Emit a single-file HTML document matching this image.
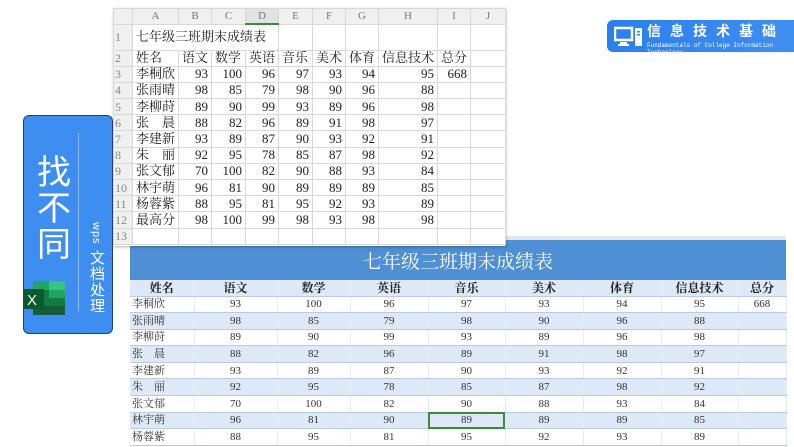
<!DOCTYPE html>
<html><head><meta charset="utf-8"><style>
*{margin:0;padding:0;box-sizing:border-box}
body{width:794px;height:447px;background:#fff;position:relative;overflow:hidden;font-family:"Liberation Serif","Noto Serif CJK SC",serif;}
.a{position:absolute}
table{border-collapse:collapse;position:absolute;table-layout:fixed}
#s td{border:1px solid #d8d8d8;font-size:13px;color:#222;height:16.2px;padding:0 3px;white-space:nowrap;line-height:14px}
#s td.n{text-align:right}
#s tr.h td{background:#f0f0f0;color:#777;text-align:center;font-size:11px;height:14px}
#s td.r{background:#f0f0f0;color:#888;font-size:12px;padding:0 1px}
#b td{font-size:11px;color:#333;text-align:center;height:16.6px;line-height:14px;border-bottom:1px solid #b8cbe2;border-right:1px solid #e4ecf6;white-space:nowrap;padding:0}
#b tr:nth-child(odd) td{background:#dde9f6}
#b td.l{text-align:left;padding-left:2px}
#b tr.hd td{font-weight:bold;font-size:12px;color:#222;background:#dde9f6;height:16px}
</style></head><body>

<div class="a" style="left:505px;top:236px;width:281px;height:5px;background:#e6e6e6"></div>
<div class="a" style="left:130px;top:240px;width:656px;height:40px;background:#4f8fd4;color:#fff;font-size:19px;text-align:center;line-height:46px;font-family:'Liberation Serif','Noto Serif CJK SC',serif">七年级三班期末成绩表</div>
<table id="b" style="left:130px;top:280px;width:656px">
<colgroup><col style="width:64px"><col style="width:83px"><col style="width:73px"><col style="width:78px"><col style="width:77px"><col style="width:78px"><col style="width:78px"><col style="width:77px"><col style="width:48px"></colgroup>
<tr class="hd"><td>姓名</td><td>语文</td><td>数学</td><td>英语</td><td>音乐</td><td>美术</td><td>体育</td><td>信息技术</td><td>总分</td></tr>
<tr><td class="l">李桐欣</td><td>93</td><td>100</td><td>96</td><td>97</td><td>93</td><td>94</td><td>95</td><td>668</td></tr>
<tr><td class="l">张雨晴</td><td>98</td><td>85</td><td>79</td><td>98</td><td>90</td><td>96</td><td>88</td><td></td></tr>
<tr><td class="l">李柳莳</td><td>89</td><td>90</td><td>99</td><td>93</td><td>89</td><td>96</td><td>98</td><td></td></tr>
<tr><td class="l">张　晨</td><td>88</td><td>82</td><td>96</td><td>89</td><td>91</td><td>98</td><td>97</td><td></td></tr>
<tr><td class="l">李建新</td><td>93</td><td>89</td><td>87</td><td>90</td><td>93</td><td>92</td><td>91</td><td></td></tr>
<tr><td class="l">朱　丽</td><td>92</td><td>95</td><td>78</td><td>85</td><td>87</td><td>98</td><td>92</td><td></td></tr>
<tr><td class="l">张文郁</td><td>70</td><td>100</td><td>82</td><td>90</td><td>88</td><td>93</td><td>84</td><td></td></tr>
<tr><td class="l">林宇萌</td><td>96</td><td>81</td><td>90</td><td style="outline:2px solid #3a8a3a;outline-offset:-2px">89</td><td>89</td><td>89</td><td>85</td><td></td></tr>
<tr><td class="l">杨蓉紫</td><td>88</td><td>95</td><td>81</td><td>95</td><td>92</td><td>93</td><td>89</td><td></td></tr>
</table>

<div class="a" style="left:113px;top:8px;width:392px;height:238px;background:#fff;box-shadow:1px 1px 3px rgba(0,0,0,.3)"></div>
<table id="s" style="left:113px;top:8px;width:392px">
<colgroup><col style="width:19px"><col style="width:46px"><col style="width:33px"><col style="width:34px"><col style="width:33px"><col style="width:34px"><col style="width:33px"><col style="width:33px"><col style="width:59px"><col style="width:33px"><col style="width:35px"></colgroup>
<tr class="h"><td></td><td>A</td><td>B</td><td>C</td><td style="border-bottom:2px solid #3a8a3a;background:#e2e2e2">D</td><td>E</td><td>F</td><td>G</td><td>H</td><td>I</td><td>J</td></tr>
<tr style="height:26px"><td class="r">1</td><td colspan="4" style="border-right:none">七年级三班期末成绩表</td><td></td><td></td><td></td><td></td><td></td><td></td></tr>
<tr><td class="r">2</td><td>姓名</td><td>语文</td><td>数学</td><td>英语</td><td>音乐</td><td>美术</td><td>体育</td><td>信息技术</td><td>总分</td><td></td></tr>
<tr><td class="r">3</td><td>李桐欣</td><td class="n">93</td><td class="n">100</td><td class="n">96</td><td class="n">97</td><td class="n">93</td><td class="n">94</td><td class="n">95</td><td class="n">668</td><td></td></tr>
<tr><td class="r">4</td><td>张雨晴</td><td class="n">98</td><td class="n">85</td><td class="n">79</td><td class="n">98</td><td class="n">90</td><td class="n">96</td><td class="n">88</td><td></td><td></td></tr>
<tr><td class="r">5</td><td>李柳莳</td><td class="n">89</td><td class="n">90</td><td class="n">99</td><td class="n">93</td><td class="n">89</td><td class="n">96</td><td class="n">98</td><td></td><td></td></tr>
<tr><td class="r">6</td><td>张　晨</td><td class="n">88</td><td class="n">82</td><td class="n">96</td><td class="n">89</td><td class="n">91</td><td class="n">98</td><td class="n">97</td><td></td><td></td></tr>
<tr><td class="r">7</td><td>李建新</td><td class="n">93</td><td class="n">89</td><td class="n">87</td><td class="n">90</td><td class="n">93</td><td class="n">92</td><td class="n">91</td><td></td><td></td></tr>
<tr><td class="r">8</td><td>朱　丽</td><td class="n">92</td><td class="n">95</td><td class="n">78</td><td class="n">85</td><td class="n">87</td><td class="n">98</td><td class="n">92</td><td></td><td></td></tr>
<tr><td class="r">9</td><td>张文郁</td><td class="n">70</td><td class="n">100</td><td class="n">82</td><td class="n">90</td><td class="n">88</td><td class="n">93</td><td class="n">84</td><td></td><td></td></tr>
<tr><td class="r">10</td><td>林宇萌</td><td class="n">96</td><td class="n">81</td><td class="n">90</td><td class="n">89</td><td class="n">89</td><td class="n">89</td><td class="n">85</td><td></td><td></td></tr>
<tr><td class="r">11</td><td>杨蓉紫</td><td class="n">88</td><td class="n">95</td><td class="n">81</td><td class="n">95</td><td class="n">92</td><td class="n">93</td><td class="n">89</td><td></td><td></td></tr>
<tr><td class="r">12</td><td>最高分</td><td class="n">98</td><td class="n">100</td><td class="n">99</td><td class="n">98</td><td class="n">93</td><td class="n">98</td><td class="n">98</td><td></td><td></td></tr>
<tr><td class="r">13</td><td></td><td></td><td></td><td></td><td></td><td></td><td></td><td></td><td></td><td></td></tr>
</table>

<div class="a" style="left:23px;top:115px;width:90px;height:219px;background:#3d8ef0;border:1.5px solid #1d3f7a;border-radius:6px"></div>
<div class="a" style="left:78px;top:133px;width:1px;height:178px;background:#8dbcf5"></div>
<div class="a" style="left:32px;top:155px;width:44px;color:#fff;font-family:'Liberation Sans','Noto Sans CJK SC',sans-serif;font-size:34px;line-height:36px;text-align:center">找<br>不<br>同</div>
<div class="a" style="left:86px;top:222px;writing-mode:vertical-rl;color:#fff;font-family:'Liberation Sans','Noto Sans CJK SC',sans-serif;font-size:15px;letter-spacing:1px;line-height:20px"><span style="font-size:11px">wps</span> 文档处理</div>
<svg class="a" style="left:23px;top:278px" width="43" height="40" viewBox="0 0 43 40">
<rect x="10" y="3" width="32" height="34" rx="2" fill="#107c41"/>
<rect x="26" y="3" width="16" height="9" fill="#33c481"/>
<rect x="26" y="12" width="16" height="8" fill="#21a366"/>
<rect x="10" y="3" width="16" height="9" fill="#21a366"/>
<rect x="10" y="28" width="32" height="9" fill="#185c37"/>
<rect x="0" y="11" width="21" height="20" rx="1" fill="#0b5a2e"/>
<text x="4" y="27" fill="#fff" font-family="Liberation Sans" font-size="15">X</text>
</svg>

<div class="a" style="left:607px;top:20px;width:187px;height:32px;background:linear-gradient(90deg,#2a7ff0,#3f8ef2);border-radius:6px 0 0 6px"></div>
<svg class="a" style="left:614px;top:26px" width="30" height="22" viewBox="0 0 30 22">
<rect x="1" y="2" width="17" height="12" fill="none" stroke="#fff" stroke-width="2.5"/>
<rect x="6" y="16" width="7" height="2" fill="#fff"/><rect x="4" y="18" width="11" height="2" fill="#fff"/>
<rect x="21" y="2" width="7" height="18" fill="#fff"/>
<rect x="23" y="5" width="3" height="1.5" fill="#2a7ff0"/><rect x="23" y="8" width="3" height="1.5" fill="#2a7ff0"/>
</svg>
<div class="a" style="left:647px;top:21px;color:#fff;font-family:'Liberation Sans','Noto Sans CJK SC',sans-serif;font-weight:bold;font-size:14px;letter-spacing:9px;white-space:nowrap">信息技术基础</div>
<div class="a" style="left:647px;top:42px;color:#fff;font-family:'Liberation Mono',monospace;font-size:6px;white-space:nowrap;line-height:7px">Fundamentals of College Information<br>Technology</div>
</body></html>
